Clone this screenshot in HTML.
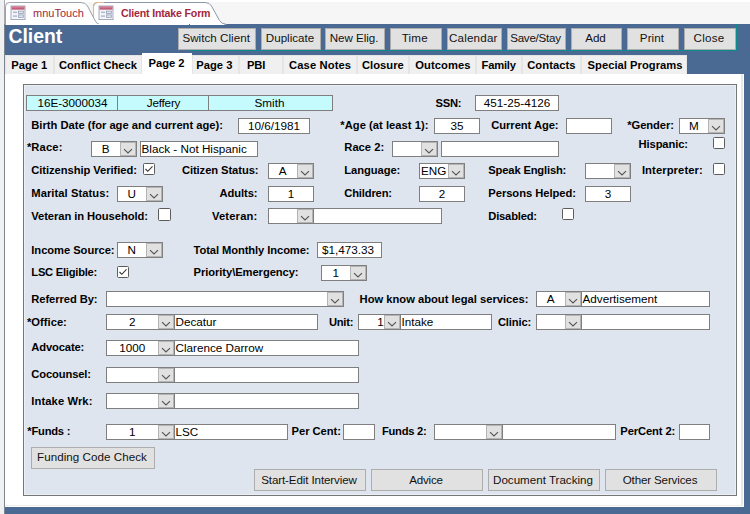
<!DOCTYPE html>
<html lang="en"><head><meta charset="utf-8"><title>Client Intake Form</title>
<style>
*{margin:0;padding:0;box-sizing:border-box}
html,body{width:750px;height:514px;overflow:hidden;background:#4a6a94}
body{position:relative;font-family:"Liberation Sans",Arial,sans-serif;font-size:11.2px;color:#000}
#root{position:absolute;left:0;top:0;width:750px;height:514px;overflow:hidden}
#root>*{position:absolute;white-space:nowrap}
.lb{font-weight:bold;font-size:11.2px;line-height:15px;height:15px}
.tb{background:#fff;border:1px solid #7f7f7f;font-size:11.7px;line-height:13px;overflow:hidden}
.cy{background:#c5fbfd}
.cb{display:block}
.cv{display:inline-block;text-align:center;vertical-align:top}
.arw{position:absolute;right:0;top:0;width:16px;height:14px;background:#e1e1e1;box-shadow:inset 0 0 0 1px #b4b4b4}
.arw svg{display:block;position:absolute;left:0;top:0}
.ck{background:#fff;border:1px solid #5c5c5c;border-radius:1.5px}
.ck svg{display:block;position:absolute;left:-1px;top:-1px}
.bt{background:#e1e1e1;border:1px solid #adadad;text-align:center;font-size:11.6px;color:#111;padding-right:2px}
.tab{background:#f0f0f0;border:1px solid #e5e5e5;border-bottom:none;text-align:left;font-weight:bold;font-size:11.2px;overflow:hidden}
.tab.act{background:#fff;border-color:#fff}
.title{font-weight:bold;font-size:19.4px;color:#fff;line-height:24px}
.dt{font-size:11px;color:#a2283c;line-height:14px}
.dtb{font-weight:bold;font-size:10.6px;letter-spacing:-0.17px}
</style></head>
<body><div id="root">
<div class="abs" style="left:0px;top:0px;width:750px;height:24px;background:#f6f6f6"></div>
<div class="abs" style="left:0px;top:0px;width:750px;height:2px;background:#ffffff"></div>
<div class="abs" style="left:0px;top:0px;width:5px;height:514px;background:#eff0f2"></div>
<div class="abs" style="left:4px;top:0px;width:1px;height:24px;background:#a9abae"></div>
<div class="abs" style="left:4px;top:24px;width:1px;height:490px;background:#7f858d"></div>
<div class="abs" style="left:5px;top:24px;width:745px;height:490px;background:#4a6a94"></div>
<svg class="abs" style="left:0;top:0" width="240" height="25" viewBox="0 0 240 25">
<path d="M93.500 25 V6.500 Q93.500 2.500 97.500 2.500 H205 Q209.500 2.500 211.500 6 L219.500 20.500 Q221.500 24 226 24.300 V25 Z" fill="#ffffff" stroke="#8d97a6" stroke-width="1"/>
<path d="M93.500 24 V6.500 Q93.500 2.500 97.500 2.500 H104" fill="none" stroke="#dcbc90" stroke-width="1.2"/>
<path d="M5.500 25 V6.500 Q5.500 2.500 9.500 2.500 H81 Q85.500 2.500 87.500 6 L94.800 20 Q96.500 23.600 99 24.200 V25 Z" fill="#fefefe" stroke="#9aa1ab" stroke-width="1"/>
<rect x="6" y="24" width="218" height="1" fill="#ffffff"/>
<g transform="translate(10.500,5.500)">
<rect x="0.5" y="0.5" width="14" height="13.500" fill="#f3f5fa" stroke="#a3abc0"/>
<rect x="1" y="1" width="13" height="3.200" fill="#c4607c"/>
<rect x="1" y="1" width="13" height="1.200" fill="#d88098"/>
<rect x="2.500" y="6" width="4" height="1.600" fill="#b4bccc"/><rect x="8" y="5.600" width="5" height="2.400" fill="#dfe4ee" stroke="#8c96ac" stroke-width="0.7"/>
<rect x="2.500" y="9.800" width="4" height="1.600" fill="#b4bccc"/><rect x="8" y="9.400" width="5" height="2.400" fill="#dfe4ee" stroke="#8c96ac" stroke-width="0.7"/>
</g>
<g transform="translate(98.500,5.500)">
<rect x="0.5" y="0.5" width="14" height="13.500" fill="#f3f5fa" stroke="#a3abc0"/>
<rect x="1" y="1" width="13" height="3.200" fill="#c4607c"/>
<rect x="1" y="1" width="13" height="1.200" fill="#d88098"/>
<rect x="2.500" y="6" width="4" height="1.600" fill="#b4bccc"/><rect x="8" y="5.600" width="5" height="2.400" fill="#dfe4ee" stroke="#8c96ac" stroke-width="0.7"/>
<rect x="2.500" y="9.800" width="4" height="1.600" fill="#b4bccc"/><rect x="8" y="9.400" width="5" height="2.400" fill="#dfe4ee" stroke="#8c96ac" stroke-width="0.7"/>
</g>
</svg>
<div class="dt" style="left:33px;top:6px;">mnuTouch</div>
<div class="dt dtb" style="left:121px;top:6px;">Client Intake Form</div>
<div class="title" style="left:8.4px;top:24px;">Client</div>
<div class="abs" style="left:189px;top:24px;width:548px;height:27px;border:1px solid #0a8a8a;border-top:none;box-sizing:border-box"></div>
<div class="bt hbt" style="left:178px;top:28px;width:78.4px;height:22px;line-height:18px;letter-spacing:0.045px;">Switch Client</div>
<div class="bt hbt" style="left:261.4px;top:28px;width:59.2px;height:22px;line-height:18px;letter-spacing:-0.005px;">Duplicate</div>
<div class="bt hbt" style="left:325.2px;top:28px;width:59.8px;height:22px;line-height:18px;letter-spacing:-0.008px;">New Elig.</div>
<div class="bt hbt" style="left:390px;top:28px;width:51.6px;height:22px;line-height:18px;letter-spacing:0.239px;">Time</div>
<div class="bt hbt" style="left:446.6px;top:28px;width:55.4px;height:22px;line-height:18px;letter-spacing:0.192px;">Calendar</div>
<div class="bt hbt" style="left:507px;top:28px;width:59px;height:22px;line-height:18px;letter-spacing:-0.250px;">Save/Stay</div>
<div class="bt hbt" style="left:570.6px;top:28px;width:51.8px;height:22px;line-height:18px;letter-spacing:-0.014px;">Add</div>
<div class="bt hbt" style="left:627px;top:28px;width:52px;height:22px;line-height:18px;letter-spacing:0.091px;">Print</div>
<div class="bt hbt" style="left:684px;top:28px;width:52px;height:22px;line-height:18px;letter-spacing:0.250px;">Close</div>
<div class="abs" style="left:5px;top:74px;width:739px;height:433px;background:#ffffff"></div>
<div class="abs" style="left:741px;top:74px;width:2px;height:432px;background:#e8e8e8"></div>
<div class="abs" style="left:5px;top:505px;width:738px;height:1px;background:#efeeec"></div>
<div class="tab" style="left:5px;top:55px;width:48.6px;height:19px;line-height:19px;padding-left:5.3px;letter-spacing:-0.030px;">Page 1</div>
<div class="tab" style="left:53.6px;top:55px;width:88.0px;height:19px;line-height:19px;padding-left:4.4px;letter-spacing:-0.031px;">Conflict Check</div>
<div class="tab act" style="left:141.6px;top:53px;width:50.6px;height:22px;line-height:18px;padding-left:6.0px;letter-spacing:-0.030px;">Page 2</div>
<div class="tab" style="left:192.2px;top:55px;width:46.6px;height:19px;line-height:19px;padding-left:3.0px;letter-spacing:0.037px;">Page 3</div>
<div class="tab" style="left:238.8px;top:55px;width:44.6px;height:19px;line-height:19px;padding-left:7.2px;letter-spacing:-0.152px;">PBI</div>
<div class="tab" style="left:283.4px;top:55px;width:73.4px;height:19px;line-height:19px;padding-left:4.7px;letter-spacing:0.116px;">Case Notes</div>
<div class="tab" style="left:356.8px;top:55px;width:52.0px;height:19px;line-height:19px;padding-left:4.2px;letter-spacing:0.021px;">Closure</div>
<div class="tab" style="left:408.8px;top:55px;width:67.0px;height:19px;line-height:19px;padding-left:5.4px;letter-spacing:0.098px;">Outcomes</div>
<div class="tab" style="left:475.8px;top:55px;width:46.0px;height:19px;line-height:19px;padding-left:4.8px;letter-spacing:-0.209px;">Family</div>
<div class="tab" style="left:521.8px;top:55px;width:58.8px;height:19px;line-height:19px;padding-left:4.4px;letter-spacing:0.066px;">Contacts</div>
<div class="tab" style="left:580.6px;top:55px;width:106.4px;height:19px;line-height:19px;padding-left:6.0px;letter-spacing:0.030px;">Special Programs</div>
<div class="abs" style="left:23px;top:84px;width:714px;height:412px;background:#dfe5ef;border:1px solid #767676;box-sizing:border-box;box-shadow:inset 0 0 0 1px #ebeff6"></div>
<div class="tb cy" style="left:26px;top:95px;width:92px;height:16px;text-align:center;padding-left:1px">16E-3000034</div>
<div class="tb cy" style="left:117px;top:95px;width:92px;height:16px;text-align:center;letter-spacing:-0.2px;padding-left:1px">Jeffery</div>
<div class="tb cy" style="left:208px;top:95px;width:125px;height:16px;text-align:center;padding-right:2px">Smith</div>
<div class="lb" style="left:435.6px;top:96px;letter-spacing:-0.250px;">SSN:</div>
<div class="tb" style="left:475px;top:95px;width:84px;height:16px;text-align:center;">451-25-4126</div>
<div class="lb" style="left:31.3px;top:118px;letter-spacing:-0.013px;">Birth Date (for age and current age):</div>
<div class="tb" style="left:238px;top:118px;width:72px;height:16px;text-align:center;">10/6/1981</div>
<div class="lb" style="left:340.3px;top:118px;letter-spacing:0.029px;">*Age (at least 1):</div>
<div class="tb" style="left:434px;top:118px;width:46px;height:16px;text-align:center;">35</div>
<div class="lb" style="left:491.3px;top:118px;letter-spacing:-0.064px;">Current Age:</div>
<div class="tb" style="left:566px;top:118px;width:46px;height:16px;text-align:center;"></div>
<div class="lb" style="left:627.3px;top:118px;letter-spacing:-0.081px;">*Gender:</div>
<div class="tb cb" style="left:679px;top:118px;width:46px;height:16px;"><span class="cv" style="width:27.5px">M</span><span class="arw"><svg width="16" height="14" viewBox="0 0 16 14"><path d="M4 7.200 L8 11 L12 7.200" fill="none" stroke="#555" stroke-width="1.15"/></svg></span></div>
<div class="lb" style="left:26.9px;top:140px;letter-spacing:0.129px;">*Race:</div>
<div class="tb cb" style="left:91px;top:141px;width:46px;height:16px;"><span class="cv" style="width:27.5px">B</span><span class="arw"><svg width="16" height="14" viewBox="0 0 16 14"><path d="M4 7.200 L8 11 L12 7.200" fill="none" stroke="#555" stroke-width="1.15"/></svg></span></div>
<div class="tb" style="left:140px;top:141px;width:118px;height:16px;text-align:left;padding-left:0.5px;">Black - Not Hispanic</div>
<div class="lb" style="left:344.3px;top:140px;letter-spacing:0.013px;">Race 2:</div>
<div class="tb cb" style="left:392px;top:141px;width:46px;height:16px;"><span class="cv" style="width:27.5px"></span><span class="arw"><svg width="16" height="14" viewBox="0 0 16 14"><path d="M4 7.200 L8 11 L12 7.200" fill="none" stroke="#555" stroke-width="1.15"/></svg></span></div>
<div class="tb" style="left:441px;top:141px;width:118px;height:16px;text-align:left;padding-left:0.5px;"></div>
<div class="lb" style="left:638.6px;top:137px;letter-spacing:-0.118px;">Hispanic:</div>
<div class="ck" style="left:713px;top:137px;width:12px;height:12px"></div>
<div class="lb" style="left:31.3px;top:163px;letter-spacing:-0.063px;">Citizenship Verified:</div>
<div class="ck" style="left:143px;top:163px;width:12px;height:12px"><svg width="12" height="12" viewBox="0 0 12 12"><path d="M2.500 6 L4.800 8.300 L9.500 3.400" fill="none" stroke="#333" stroke-width="1.1"/></svg></div>
<div class="lb" style="left:181.9px;top:163px;letter-spacing:-0.074px;">Citizen Status:</div>
<div class="tb cb" style="left:268px;top:163px;width:46px;height:16px;"><span class="cv" style="width:27.5px">A</span><span class="arw"><svg width="16" height="14" viewBox="0 0 16 14"><path d="M4 7.200 L8 11 L12 7.200" fill="none" stroke="#555" stroke-width="1.15"/></svg></span></div>
<div class="lb" style="left:344.3px;top:163px;letter-spacing:-0.074px;">Language:</div>
<div class="tb cb" style="left:419px;top:163px;width:46px;height:16px;"><span class="cv" style="width:27.5px">ENG</span><span class="arw"><svg width="16" height="14" viewBox="0 0 16 14"><path d="M4 7.200 L8 11 L12 7.200" fill="none" stroke="#555" stroke-width="1.15"/></svg></span></div>
<div class="lb" style="left:488.3px;top:163px;letter-spacing:-0.165px;">Speak English:</div>
<div class="tb cb" style="left:585px;top:163px;width:46px;height:16px;"><span class="cv" style="width:27.5px"></span><span class="arw"><svg width="16" height="14" viewBox="0 0 16 14"><path d="M4 7.200 L8 11 L12 7.200" fill="none" stroke="#555" stroke-width="1.15"/></svg></span></div>
<div class="lb" style="left:641.9px;top:163px;letter-spacing:0.109px;">Interpreter:</div>
<div class="ck" style="left:713px;top:163px;width:12px;height:12px"></div>
<div class="lb" style="left:31.3px;top:186px;letter-spacing:0.054px;">Marital Status:</div>
<div class="tb cb" style="left:117px;top:186px;width:46px;height:16px;"><span class="cv" style="width:27.5px">U</span><span class="arw"><svg width="16" height="14" viewBox="0 0 16 14"><path d="M4 7.200 L8 11 L12 7.200" fill="none" stroke="#555" stroke-width="1.15"/></svg></span></div>
<div class="lb" style="left:219.6px;top:186px;letter-spacing:-0.090px;">Adults:</div>
<div class="tb" style="left:268px;top:186px;width:46px;height:16px;text-align:center;">1</div>
<div class="lb" style="left:344.3px;top:186px;letter-spacing:-0.168px;">Children:</div>
<div class="tb" style="left:419px;top:186px;width:46px;height:16px;text-align:center;">2</div>
<div class="lb" style="left:488.3px;top:186px;letter-spacing:-0.046px;">Persons Helped:</div>
<div class="tb" style="left:585px;top:186px;width:46px;height:16px;text-align:center;">3</div>
<div class="lb" style="left:31.3px;top:209px;letter-spacing:-0.072px;">Veteran in Household:</div>
<div class="ck" style="left:158px;top:208px;width:13px;height:13px"></div>
<div class="lb" style="left:211.9px;top:209px;letter-spacing:0.180px;">Veteran:</div>
<div class="tb cb" style="left:268px;top:208px;width:46px;height:16px;"><span class="cv" style="width:27.5px"></span><span class="arw"><svg width="16" height="14" viewBox="0 0 16 14"><path d="M4 7.200 L8 11 L12 7.200" fill="none" stroke="#555" stroke-width="1.15"/></svg></span></div>
<div class="tb" style="left:313px;top:208px;width:129px;height:16px;text-align:left;padding-left:0.5px;"></div>
<div class="lb" style="left:488.3px;top:209px;letter-spacing:-0.195px;">Disabled:</div>
<div class="ck" style="left:562px;top:208px;width:12px;height:12px"></div>
<div class="lb" style="left:31.3px;top:243px;letter-spacing:-0.053px;">Income Source:</div>
<div class="tb cb" style="left:117px;top:242px;width:46px;height:16px;"><span class="cv" style="width:27.5px">N</span><span class="arw"><svg width="16" height="14" viewBox="0 0 16 14"><path d="M4 7.200 L8 11 L12 7.200" fill="none" stroke="#555" stroke-width="1.15"/></svg></span></div>
<div class="lb" style="left:193.6px;top:243px;letter-spacing:-0.095px;">Total Monthly Income:</div>
<div class="tb" style="left:317px;top:242px;width:65px;height:16px;text-align:left;padding-left:0.5px;padding-left:4px">$1,473.33</div>
<div class="lb" style="left:31.3px;top:265px;letter-spacing:-0.250px;">LSC Eligible:</div>
<div class="ck" style="left:117px;top:266px;width:12px;height:12px"><svg width="12" height="12" viewBox="0 0 12 12"><path d="M2.500 6 L4.800 8.300 L9.500 3.400" fill="none" stroke="#333" stroke-width="1.1"/></svg></div>
<div class="lb" style="left:193.6px;top:265px;letter-spacing:-0.075px;">Priority\Emergency:</div>
<div class="tb cb" style="left:321px;top:265px;width:46px;height:16px;"><span class="cv" style="width:27.5px">1</span><span class="arw"><svg width="16" height="14" viewBox="0 0 16 14"><path d="M4 7.200 L8 11 L12 7.200" fill="none" stroke="#555" stroke-width="1.15"/></svg></span></div>
<div class="lb" style="left:31.3px;top:292px;letter-spacing:-0.080px;">Referred By:</div>
<div class="tb cb" style="left:106px;top:291px;width:238px;height:16px;"><span class="cv" style="width:219.5px"></span><span class="arw"><svg width="16" height="14" viewBox="0 0 16 14"><path d="M4 7.200 L8 11 L12 7.200" fill="none" stroke="#555" stroke-width="1.15"/></svg></span></div>
<div class="lb" style="left:359.6px;top:292px;letter-spacing:-0.007px;">How know about legal services:</div>
<div class="tb cb" style="left:536px;top:291px;width:46px;height:16px;"><span class="cv" style="width:27.5px">A</span><span class="arw"><svg width="16" height="14" viewBox="0 0 16 14"><path d="M4 7.200 L8 11 L12 7.200" fill="none" stroke="#555" stroke-width="1.15"/></svg></span></div>
<div class="tb" style="left:581px;top:291px;width:129px;height:16px;text-align:left;padding-left:0.5px;">Advertisement</div>
<div class="lb" style="left:26.9px;top:315px;letter-spacing:0.025px;">*Office:</div>
<div class="tb cb" style="left:106px;top:314px;width:69px;height:16px;"><span class="cv" style="width:50.5px">2</span><span class="arw"><svg width="16" height="14" viewBox="0 0 16 14"><path d="M4 7.200 L8 11 L12 7.200" fill="none" stroke="#555" stroke-width="1.15"/></svg></span></div>
<div class="tb" style="left:174px;top:314px;width:144px;height:16px;text-align:left;padding-left:0.5px;">Decatur</div>
<div class="lb" style="left:328.9px;top:315px;letter-spacing:-0.250px;">Unit:</div>
<div class="tb cb" style="left:358px;top:314px;width:43px;height:16px;"><span class="cv" style="width:43px">1</span><span class="arw"><svg width="16" height="14" viewBox="0 0 16 14"><path d="M4 7.200 L8 11 L12 7.200" fill="none" stroke="#555" stroke-width="1.15"/></svg></span></div>
<div class="tb" style="left:400px;top:314px;width:92px;height:16px;text-align:left;padding-left:0.5px;">Intake</div>
<div class="lb" style="left:497.9px;top:315px;letter-spacing:-0.127px;">Clinic:</div>
<div class="tb cb" style="left:536px;top:314px;width:46px;height:16px;"><span class="cv" style="width:27.5px"></span><span class="arw"><svg width="16" height="14" viewBox="0 0 16 14"><path d="M4 7.200 L8 11 L12 7.200" fill="none" stroke="#555" stroke-width="1.15"/></svg></span></div>
<div class="tb" style="left:581px;top:314px;width:129px;height:16px;text-align:left;padding-left:0.5px;"></div>
<div class="lb" style="left:31.3px;top:340px;letter-spacing:-0.133px;">Advocate:</div>
<div class="tb cb" style="left:106px;top:340px;width:69px;height:16px;"><span class="cv" style="width:50.5px">1000</span><span class="arw"><svg width="16" height="14" viewBox="0 0 16 14"><path d="M4 7.200 L8 11 L12 7.200" fill="none" stroke="#555" stroke-width="1.15"/></svg></span></div>
<div class="tb" style="left:174px;top:340px;width:185px;height:16px;text-align:left;padding-left:0.5px;">Clarence Darrow</div>
<div class="lb" style="left:31.3px;top:367px;letter-spacing:-0.132px;">Cocounsel:</div>
<div class="tb cb" style="left:106px;top:367px;width:69px;height:16px;"><span class="cv" style="width:50.5px"></span><span class="arw"><svg width="16" height="14" viewBox="0 0 16 14"><path d="M4 7.200 L8 11 L12 7.200" fill="none" stroke="#555" stroke-width="1.15"/></svg></span></div>
<div class="tb" style="left:174px;top:367px;width:185px;height:16px;text-align:left;padding-left:0.5px;"></div>
<div class="lb" style="left:31.3px;top:394px;letter-spacing:0.099px;">Intake Wrk:</div>
<div class="tb cb" style="left:106px;top:393px;width:69px;height:16px;"><span class="cv" style="width:50.5px"></span><span class="arw"><svg width="16" height="14" viewBox="0 0 16 14"><path d="M4 7.200 L8 11 L12 7.200" fill="none" stroke="#555" stroke-width="1.15"/></svg></span></div>
<div class="tb" style="left:174px;top:393px;width:185px;height:16px;text-align:left;padding-left:0.5px;"></div>
<div class="lb" style="left:27.3px;top:424px;letter-spacing:-0.231px;">*Funds :</div>
<div class="tb cb" style="left:106px;top:424px;width:69px;height:16px;"><span class="cv" style="width:50.5px">1</span><span class="arw"><svg width="16" height="14" viewBox="0 0 16 14"><path d="M4 7.200 L8 11 L12 7.200" fill="none" stroke="#555" stroke-width="1.15"/></svg></span></div>
<div class="tb" style="left:174px;top:424px;width:114px;height:16px;text-align:left;padding-left:0.5px;">LSC</div>
<div class="lb" style="left:291.6px;top:424px;letter-spacing:-0.048px;">Per Cent:</div>
<div class="tb" style="left:343px;top:424px;width:32px;height:16px;text-align:center;"></div>
<div class="lb" style="left:381.9px;top:424px;letter-spacing:-0.250px;">Funds 2:</div>
<div class="tb cb" style="left:434px;top:424px;width:69px;height:16px;"><span class="cv" style="width:50.5px"></span><span class="arw"><svg width="16" height="14" viewBox="0 0 16 14"><path d="M4 7.200 L8 11 L12 7.200" fill="none" stroke="#555" stroke-width="1.15"/></svg></span></div>
<div class="tb" style="left:502px;top:424px;width:114px;height:16px;text-align:left;padding-left:0.5px;"></div>
<div class="lb" style="left:620.3px;top:424px;letter-spacing:-0.107px;">PerCent 2:</div>
<div class="tb" style="left:679px;top:424px;width:31px;height:16px;text-align:center;"></div>
<div class="bt" style="left:31px;top:447px;width:124px;height:22px;line-height:18px;letter-spacing:0.054px;">Funding Code Check</div>
<div class="bt" style="left:254px;top:469px;width:112px;height:22px;line-height:20px;letter-spacing:-0.117px;">Start-Edit Interview</div>
<div class="bt" style="left:371px;top:469px;width:112px;height:22px;line-height:20px;letter-spacing:-0.202px;">Advice</div>
<div class="bt" style="left:488px;top:469px;width:112px;height:22px;line-height:20px;">Document Tracking</div>
<div class="bt" style="left:605px;top:469px;width:112px;height:22px;line-height:20px;letter-spacing:-0.149px;">Other Services</div>
</div></body></html>
